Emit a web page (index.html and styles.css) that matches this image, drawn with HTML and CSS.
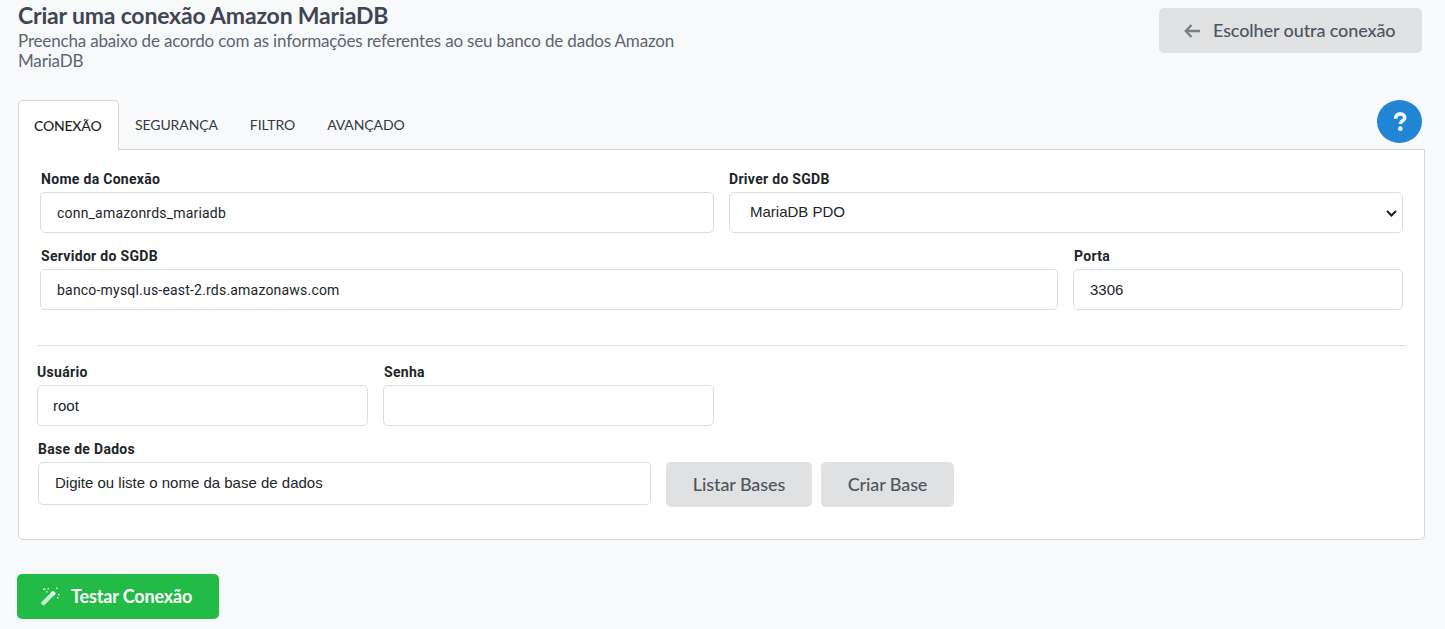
FILE: index.html
```html
<!DOCTYPE html>
<html lang="pt-BR">
<head>
<meta charset="utf-8">
<title>Criar uma conexão Amazon MariaDB</title>
<link rel="stylesheet" href="styles.css">
</head>
<body>
<header class="page-head">
  <div class="head-text">
    <h1>Criar uma conexão Amazon MariaDB</h1>
    <p>Preencha abaixo de acordo com as informações referentes ao seu banco de dados Amazon MariaDB</p>
  </div>
  <button class="btn btn-back" type="button">
    <svg class="back-icon" viewBox="0 0 16 14" width="16" height="14"><path d="M7.500 1 1.800 7l5.700 6M2.200 7h13.800" fill="none" stroke="currentColor" stroke-width="2.400"/></svg>
    Escolher outra conexão
  </button>
</header>
<nav class="tabs">
  <a class="tab active">CONEXÃO</a>
  <a class="tab">SEGURANÇA</a>
  <a class="tab">FILTRO</a>
  <a class="tab">AVANÇADO</a>
  <span class="help">
    <svg viewBox="0 0 12 18" width="14" height="19"><path d="M1.800 6.400C1.800 3.400 3.700 1.800 6.200 1.800 8.700 1.800 10.500 3.400 10.500 5.500 10.500 8.400 6.300 8.200 6.300 11.300" fill="none" stroke="#f0f6fb" stroke-width="3.400"/><circle cx="6.300" cy="15.800" r="2.200" fill="#f0f6fb"/></svg>
  </span>
</nav>
<section class="panel">
  <div class="row row-a">
    <div class="field"><label>Nome da Conexão</label><input class="control narrow" value="conn_amazonrds_mariadb"></div>
    <div class="field"><label>Driver do SGDB</label><select class="control select"><option>MariaDB PDO</option></select></div>
  </div>
  <div class="row row-b">
    <div class="field"><label>Servidor do SGDB</label><input class="control narrow" value="banco-mysql.us-east-2.rds.amazonaws.com"></div>
    <div class="field"><label>Porta</label><input class="control" value="3306"></div>
  </div>
  <hr class="divider">
  <div class="row row-c">
    <div class="field"><label>Usuário</label><input class="control" value="root"></div>
    <div class="field"><label class="senha">Senha</label><input class="control" type="password"></div>
  </div>
  <div class="row-d">
    <div class="field base"><label>Base de Dados</label><input class="control tall" placeholder="Digite ou liste o nome da base de dados"></div>
    <button class="btn btn-list" type="button">Listar Bases</button>
    <button class="btn btn-create" type="button">Criar Base</button>
  </div>
</section>
<button class="btn btn-test" type="button">
  <svg viewBox="0 0 20 20" width="20" height="20"><path d="M1.500 16 12 5.500c.6-.6 1.500-.6 2 0l1 1c.6.600.6 1.400 0 2L4.500 19c-.6.600-1.400.600-2 0l-1-1c-.6-.6-.6-1.400 0-2z" fill="#c9eed3"/><path d="M10.800 6.700 13 4.800l2.700 2.700-2 2.200z" fill="#ffffff"/><path d="M7.500 2h1.500v1.500H7.500zM3 2.500h2.500V4H3zM6 5h1.500v1.500H6zM16 1.500h1.500V3H16zM17 11h1.500v1.500H17zM18 8h1.500v1.500H18z" fill="#c9eed3"/></svg>
  Testar Conexão
</button>
</body>
</html>
```
FILE: styles.css
```css
* { box-sizing: border-box; }
html, body { height: 629px; overflow: hidden; }
body {
  margin: 0;
  padding: 0 20px 0 18px;
  background: #f8f9fb;
  font-family: "Liberation Sans", Roboto, sans-serif;
  color: #212529;
}
.page-head {
  display: flex;
  justify-content: space-between;
  align-items: flex-start;
  height: 100px;
}
.head-text { width: 670px; padding-top: 2px; }
h1 {
  margin: 0;
  font: 700 23px/26px Lato, sans-serif;
  letter-spacing: -0.18px;
  color: #3f4553;
}
.head-text p {
  margin: 3px 0 0;
  font: 400 17px/20px Lato, sans-serif;
  letter-spacing: -0.17px;
  color: #5c6470;
}
.btn {
  border: 0;
  border-radius: 5px;
  background: #e0e1e3;
  color: #4f5560;
  font: 500 18px/22px Lato, sans-serif;
  letter-spacing: -0.1px;
  padding-bottom: 2px;
}
.btn-back {
  display: flex;
  align-items: center;
  gap: 13px;
  width: 263px;
  height: 45px;
  margin: 8px 3px 0 0;
  padding: 0 0 2px 25px;
}
.back-icon { color: #7a7d82; margin-top: 2px; }
.tabs {
  display: flex;
  align-items: flex-start;
  height: 50px;
  position: relative;
  margin-bottom: -1px;
}
.tab {
  height: 50px;
  padding: 17px 16px 0;
  font: 400 14px/16px Lato, sans-serif;
  letter-spacing: -0.1px;
  color: #343a40;
  border: 0;
}
.tab.active {
  background: #fff;
  border: 1px solid #d5d6d8;
  border-bottom: 0;
  border-radius: 5px 5px 0 0;
  color: #1c1f24;
  position: relative;
  z-index: 1;
  width: 101px;
  padding-left: 15px;
  letter-spacing: -0.2px;
  font-weight: 500;
}
.help {
  position: absolute;
  top: 0;
  right: 3px;
  width: 45px;
  height: 43px;
  border-radius: 50%;
  background: #2185d5;
  display: flex;
  align-items: center;
  justify-content: center;
}
.panel {
  width: 1407px;
  height: 391px;
  background: #fff;
  border: 1px solid #d5d6d8;
  border-radius: 0 0 5px 5px;
  padding: 21px 18px 0;
}
.row { display: grid; column-gap: 15px; }
.row-a { grid-template-columns: 674px 674px; margin-left: 3px; margin-bottom: 15px; }
.row-b { grid-template-columns: 1018px 330px; margin-left: 3px; }
.row-c { grid-template-columns: 331px 331px; margin-bottom: 15px; }
.field label {
  display: block;
  height: 16px;
  margin-bottom: 5px;
  font: 700 14px/16px Roboto, sans-serif;
  letter-spacing: 0.3px;
  color: #212529;
}
.row-a label { padding-left: 1px; }
.row-b label { padding-left: 1px; }
.row-a .field:last-child label { padding-left: 0; }
.field .senha { padding-left: 1px; }
.control {
  display: block;
  width: 100%;
  height: 41px;
  border: 1px solid #dcdde0;
  border-radius: 5px;
  background: #fff;
  padding: 0 15px 0 16px;
  font: 400 15px/20px "Liberation Sans", sans-serif;
  color: #212529;
  outline: 0;
}
.row-c .control { padding-left: 15px; }
.narrow { font: 400 14px/20px Roboto, sans-serif; letter-spacing: 0.2px; }
.select {
  padding: 0 0 2px 20px;
  appearance: none;
  -webkit-appearance: none;
  background: #fff url("data:image/svg+xml,%3Csvg xmlns='http://www.w3.org/2000/svg' width='11' height='7' viewBox='0 0 11 7'%3E%3Cpath d='M1 1l4.500 4.500L10 1' fill='none' stroke='%23222' stroke-width='2'/%3E%3C/svg%3E") no-repeat right 5px top 17px;
}
.divider {
  margin: 35px 0 18px;
  border: 0;
  border-top: 1px solid #dcdde0;
}
.row-d { display: flex; align-items: flex-end; margin-left: 1px; }
.base { width: 613px; margin-right: 15px; }
.tall { height: 43px; padding-left: 16px; padding-bottom: 2px; }
.tall::placeholder { color: #212529; opacity: 1; }
.btn-list { width: 146px; height: 45px; margin-right: 9px; margin-bottom: -2px; }
.btn-create { width: 133px; height: 45px; margin-bottom: -2px; }
.btn-test {
  display: flex;
  align-items: center;
  gap: 11px;
  width: 202px;
  height: 45px;
  margin: 34px 0 0 -1px;
  padding: 0 0 2px 23px;
  background: #21bb46;
  color: #fff;
  font-weight: 700;
  letter-spacing: -0.15px;
}
```
